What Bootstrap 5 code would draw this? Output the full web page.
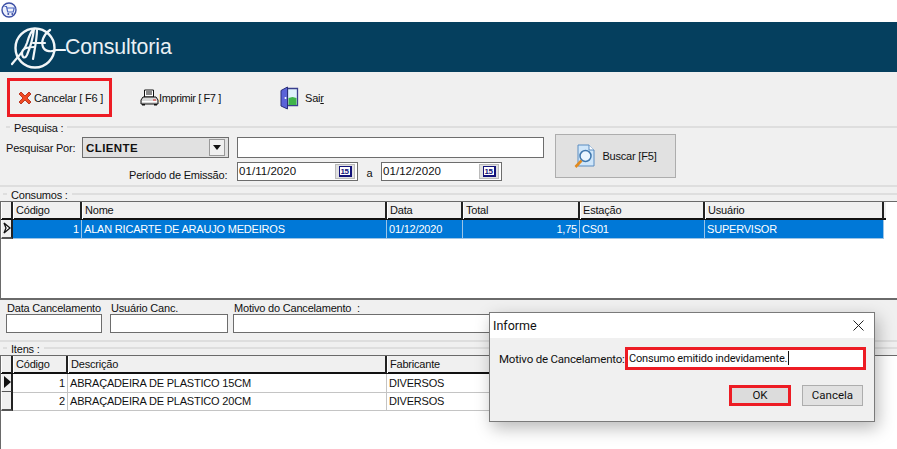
<!DOCTYPE html>
<html lang="pt-BR">
<head>
<meta charset="utf-8">
<title>Consumos</title>
<link href="https://cdn.jsdelivr.net/npm/bootstrap@5.3.0/dist/css/bootstrap.min.css" rel="stylesheet">
<style>
html,body{height:449px;overflow:hidden;background:#f0f0f0}
body{font-family:"Liberation Sans",Arial,sans-serif;font-size:11px;letter-spacing:-.2px;line-height:14px;color:#111;position:relative}
.win-top{height:22px;background:#fff;padding:2px 0 0 1px}
.win-banner{height:50px;background:#053f5e;padding-left:10px;color:#fff}
.win-banner span{font-size:21.3px;margin-left:-1px;color:#e9f0f4;line-height:52px;letter-spacing:-.1px}
.win-tools{height:50px;padding:6px 0 0 7px}
.red-box{width:105px;height:39px;border:3px solid #ed1c24;padding-left:8px}
.red-box span{margin-left:2px}
.tool-print{width:100px;margin-left:28px;height:39px;letter-spacing:-.4px}
.tool-exit{margin-left:40px;height:39px}
.tool-exit span{margin-left:6px}
.sec-head{height:12px;padding-left:6px;line-height:13px;position:relative}
.sec-head::before,.sec-head::after{content:"";height:2px;background:#dedede;margin-top:4px}
.sec-head::before{width:4px;margin-right:4px}
.sec-head::after{flex:1;margin-left:4px}
.head-tight{padding-left:3px}
.sec-form{height:51px;padding-left:6px}
.form-left{width:538px}
.row-one{height:21px;margin-top:3px;margin-bottom:4px}
.lab-por{width:76px}
.sunk{border:1px solid #6d6d6d;background:#fff;height:100%;padding:0 2px}
.combo{width:147px;background:#e1e1e1;font-weight:700;font-size:11.5px;letter-spacing:.4px;padding:0 3px}
.combo-arrow{width:16px;height:17px;background:#f0f0f0;border:1px solid #999}
.combo-arrow::after{content:"";border:4px solid transparent;border-top:5px solid #111;border-bottom:0}
.txt-input{width:307px;margin-left:8px}
.row-two{height:19px}
.lab-per{width:231px;padding-left:123px;padding-top:6px}
.date-in{width:121px;padding:0 2px 0 1px;font-size:11.5px;letter-spacing:.05px}
.date-in>span:first-child{margin-top:-2px}
.date-btn{width:20px;height:15px;background:#e1e1e1;border:1px solid #bbb}
.cal{width:13px;height:11px;background:#fff;border:1px solid #12127a;border-right-width:2px;border-bottom-width:2px;font-size:8px;line-height:9px;font-weight:700;color:#12127a;text-align:center;letter-spacing:-.4px}
.lab-a{width:23px;text-align:center;padding-top:3px}
.find-btn{width:121px;height:44px;background:#e1e1e1;border:1px solid #adadad;margin-left:11px;margin-top:0}
.find-btn span{margin-left:6px}
.sec-sep{height:4px;border-top:2px solid #dedede}
.sep-b{height:3px}
.grid-box{border-top:1px solid #6a6a6a;border-left:1px solid #6a6a6a;background:#fff}
.box-a{height:99px;border-bottom:2px solid #6a6a6a}
.box-b{height:94px}
.grid-row{display:grid;height:18px;line-height:17px}
.cols-a{grid-template-columns:12px 69px 305px 76px 117px 125px 179px;width:885px}
.cols-b{grid-template-columns:12px 55px 319px 150px;width:536px}
.grid-head{background:#f0f0f0;border-bottom:2px solid #111}
.grid-head div{padding-left:2px;border-right:2px solid #222;border-left:1px solid #fff}
.grid-head div:first-child{padding:0}
.grid-body{line-height:18px}
.grid-body div{padding:0 2px;border-right:1px solid #c4c4c4;border-bottom:1px solid #c4c4c4}
.grid-body div.ind{padding:0;background:#f0f0f0;border-right:2px solid #222;border-bottom:2px solid #555;border-left:1px solid #fff}
.grid-sel div:not(.ind){background:#0078d7;color:#fff;border-color:#9cc4e6}
.t-end{text-align:right}
.arrow-ind{display:block;width:8px;height:12px;margin:2px 0 0 1px}
.cancel-area{height:40px;padding:2px 0 0 6px}
.field-a{width:96px}.field-b{width:118px;margin-left:8px}.field-c{width:310px;margin-left:5px}
.field-lab{height:12px;line-height:12px;padding-left:1px;white-space:nowrap}
.field-box{height:19px;border:1px solid #6d6d6d;background:#fff}
.modal-win{position:absolute;left:489px;top:312px;width:386px;height:110px;background:#f0f0f0;border:1px solid #7a7a7a;box-shadow:3px 6px 16px rgba(0,0,0,.28);font-family:Roboto,"Noto Sans",sans-serif;font-size:11.5px;letter-spacing:0}
.modal-title{height:25px;background:#fff;padding:0 10px 0 3px;font-size:12.5px;line-height:25px}
.modal-line{padding:9px 8px 0 9px}
.modal-lab{width:126px;white-space:nowrap;letter-spacing:-.2px}
.modal-input{width:241px;height:23px;border:3px solid #ed1c24;background:#fff;line-height:17px;padding-left:1px;white-space:nowrap;font-size:11px;letter-spacing:-.2px}
.caret-bar{display:inline-block;width:1px;height:14px;background:#111;vertical-align:-3px;margin-left:1px}
.modal-foot{padding:15px 11px 0 0}
.ok-btn{width:62px;height:21px;border:3px solid #ed1c24;background:#dcdcdc;text-align:center;line-height:15px}
.no-btn{width:61px;height:21px;border:1px solid #adadad;background:#e1e1e1;margin-left:11px;text-align:center;line-height:19px}
</style>
</head>
<body>
<div class="win-top">
<svg width="17" height="16" viewBox="0 0 17 16"><circle cx="8" cy="8" r="7" fill="#eef1fb" stroke="#3c4fa5" stroke-width="1.4"/><path d="M3.5 4.5h2l1.2 5.5h5.5l1-4H5.5" fill="none" stroke="#4a66c0" stroke-width="1.2"/><circle cx="7.3" cy="12" r="1" fill="#3c4fa5"/><circle cx="11.3" cy="12" r="1" fill="#3c4fa5"/></svg>
</div>
<div class="win-banner d-flex align-items-center">
<svg width="56" height="50" viewBox="0 0 56 50" fill="none" stroke="#f2f6f8" stroke-linecap="round" stroke-linejoin="round"><circle cx="25" cy="26" r="19.500" stroke-width="2.400"/><path d="M2 42 C8 34 14 30 17 21 C19 14 21 9 24 7 C23 15 20 26 17 33 C15 37 12 36 12 31 C12 27 17 25 24 25" stroke-width="2.200"/><path d="M27 8 C27 16 25 26 23 37 M23 21 H35" stroke-width="2.200"/><path d="M40 8 C33 13 31 20 33 25 C35 30 42 30 46 28 H55" stroke-width="2.200"/></svg>
<span>Consultoria</span>
</div>
<div class="win-tools d-flex">
<div class="red-box d-flex align-items-center">
<svg width="14" height="14" viewBox="0 0 14 14"><path d="M1 3 3 1 7 5 11 1 13 3 9 7 13 11 11 13 7 9 3 13 1 11 5 7Z" fill="#f04a22" stroke="#b0200c" stroke-width=".8"/></svg>
<span class="text-nowrap">Cancelar [ F6 ]</span>
</div>
<div class="tool-print d-flex align-items-center">
<svg width="19" height="17" viewBox="0 0 19 17"><path d="M4.500 1h9v7h-9z" fill="#fff" stroke="#111"/><path d="M6 3h6M6 5h6" stroke="#111"/><path d="M3 8h13l2 3v4H1v-4z" fill="#d8d8d8" stroke="#111"/><path d="M2 12.500h15" stroke="#fff"/><path d="M13 11h3" stroke="#d22"/><path d="M2 15h3v1.500H2zM14 15h3v1.500h-3z" fill="#111"/></svg>
<span class="text-nowrap">Imprimir [ F7 ]</span>
</div>
<div class="tool-exit d-flex align-items-center">
<svg width="19" height="24" viewBox="0 0 18 24"><path d="M7 2.500h10v17H7z" fill="#dff3fb" stroke="#3a3f8e" stroke-width="1.300"/><path d="M8 12l4-1 4 1v7H8z" fill="#3fb44a"/><path d="M0.500 4.500 7 1v22l-6.500-3z" fill="#5a63d8" stroke="#2a2f78"/><circle cx="5" cy="12" r="1" fill="#fff"/></svg>
<span>Sai<u>r</u></span>
</div>
</div>
<div class="sec-head d-flex">Pesquisa :</div>
<div class="sec-form d-flex">
<div class="form-left">
<div class="row-one d-flex align-items-center">
<div class="lab-por">Pesquisar Por:</div>
<div class="sunk combo d-flex align-items-center justify-content-between"><span>CLIENTE</span><span class="combo-arrow d-flex align-items-center justify-content-center"></span></div>
<div class="sunk txt-input"></div>
</div>
<div class="row-two d-flex align-items-center">
<div class="lab-per text-nowrap">Período de Emissão:</div>
<div class="sunk date-in d-flex align-items-center justify-content-between"><span>01/11/2020</span><span class="date-btn d-flex align-items-center justify-content-center"><span class="cal">15</span></span></div>
<div class="lab-a">a</div>
<div class="sunk date-in d-flex align-items-center justify-content-between"><span>01/12/2020</span><span class="date-btn d-flex align-items-center justify-content-center"><span class="cal">15</span></span></div>
</div>
</div>
<div class="find-btn d-flex align-items-center justify-content-center">
<svg width="22" height="25" viewBox="0 0 22 25"><path d="M4 1h11l5 5v16H4z" fill="#cfe6fa" stroke="#5b8cc0"/><path d="M15 1v5h5" fill="#fff" stroke="#5b8cc0"/><circle cx="11.500" cy="12" r="5.500" fill="#eaf6ff" stroke="#3f77ad" stroke-width="1.500"/><path d="M7.500 16.500 1.500 23" stroke="#e08a20" stroke-width="2.600"/></svg>
<span>Buscar [F5]</span>
</div>
</div>
<div class="sec-sep"></div>
<div class="sec-head head-tight d-flex">Consumos :</div>
<div class="grid-box box-a">
<div class="grid-row cols-a grid-head"><div></div><div>Código</div><div>Nome</div><div>Data</div><div>Total</div><div>Estação</div><div>Usuário</div></div>
<div class="grid-row cols-a grid-body grid-sel"><div class="ind"><svg class="arrow-ind" viewBox="0 0 8 12"><path d="M1 1 7 6 1 11 3 6Z" fill="#fff" stroke="#111" stroke-width="1.300"/></svg></div><div class="t-end">1</div><div>ALAN RICARTE DE ARAUJO MEDEIROS</div><div>01/12/2020</div><div class="t-end">1,75</div><div>CS01</div><div>SUPERVISOR</div></div>
</div>
<div class="cancel-area d-flex">
<div class="field-a"><div class="field-lab">Data Cancelamento</div><div class="field-box"></div></div>
<div class="field-b"><div class="field-lab">Usuário Canc.</div><div class="field-box"></div></div>
<div class="field-c"><div class="field-lab">Motivo do Cancelamento&nbsp; :</div><div class="field-box"></div></div>
</div>
<div class="sec-sep sep-b"></div>
<div class="sec-head head-tight d-flex">Itens :</div>
<div class="grid-box box-b">
<div class="grid-row cols-b grid-head"><div></div><div>Código</div><div>Descrição</div><div>Fabricante</div></div>
<div class="grid-row cols-b grid-body"><div class="ind"><svg class="arrow-ind" viewBox="0 0 8 12"><path d="M1 0 8 6 1 12Z" fill="#111"/></svg></div><div class="t-end">1</div><div>ABRAÇADEIRA DE PLASTICO 15CM</div><div>DIVERSOS</div></div>
<div class="grid-row cols-b grid-body"><div class="ind"></div><div class="t-end">2</div><div>ABRAÇADEIRA DE PLASTICO 20CM</div><div>DIVERSOS</div></div>
</div>
<div class="modal-win">
<div class="modal-title d-flex align-items-center justify-content-between"><span>Informe</span>
<svg width="11" height="11" viewBox="0 0 11 11"><path d="M.5.5l10 10M10.500.5l-10 10" stroke="#222" fill="none"/></svg></div>
<div class="modal-line d-flex align-items-center"><div class="modal-lab">Motivo de Cancelamento:</div><div class="modal-input">Consumo emitido indevidamente.<span class="caret-bar"></span></div></div>
<div class="modal-foot d-flex justify-content-end"><div class="ok-btn">OK</div><div class="no-btn">Cancela</div></div>
</div>
<script src="https://cdn.jsdelivr.net/npm/bootstrap@5.3.0/dist/js/bootstrap.bundle.min.js"></script>
</body>
</html>
